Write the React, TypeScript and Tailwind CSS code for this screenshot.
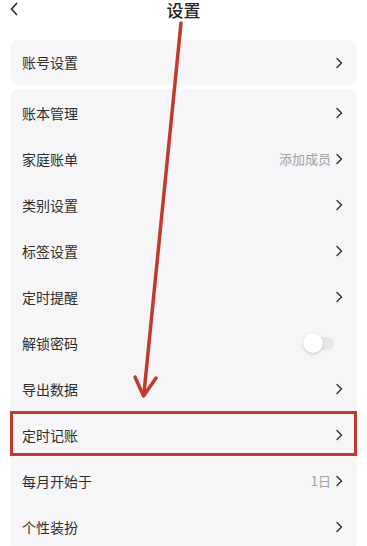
import React from 'react';

const FONT = { fontFamily: '"Noto Sans CJK SC", "Noto Sans", sans-serif' };

const Chevron = () => (
  <svg width="8" height="12" viewBox="0 0 8 12" className="shrink-0">
    <path d="M2 1.5 L6.5 6 L2 10.5" fill="none" stroke="#3a3a3a" strokeWidth="1.5" strokeLinecap="round" strokeLinejoin="round" />
  </svg>
);

const Toggle = () => (
  <div className="relative w-[30px] h-[13px] mr-[9px]">
    <div className="absolute inset-0 rounded-full bg-[#e8e8ea]" />
    <div className="absolute left-[-1px] top-[-4px] w-[20px] h-[20px] rounded-full bg-white shadow-[0_1px_3px_rgba(0,0,0,0.22)]" />
  </div>
);

type RowProps = { label: string; value?: string; toggle?: boolean };

const Row: React.FC<RowProps> = ({ label, value, toggle }) => (
  <div className="flex items-center h-[46px] pl-[12px] pr-[14px]">
    <span className="flex-1 text-[14px] text-[#2e2e2e]">{label}</span>
    {value && <span className="text-[13px] text-[#a0a0a0] mr-[4px]">{value}</span>}
    {toggle ? <Toggle /> : <Chevron />}
  </div>
);

const ROWS: RowProps[] = [
  { label: '账本管理' },
  { label: '家庭账单', value: '添加成员' },
  { label: '类别设置' },
  { label: '标签设置' },
  { label: '定时提醒' },
  { label: '解锁密码', toggle: true },
  { label: '导出数据' },
  { label: '定时记账' },
  { label: '每月开始于', value: '1日' },
  { label: '个性装扮' },
];

export default function App() {
  return (
    <div className="relative w-[367px] h-[546px] overflow-hidden bg-white" style={FONT}>
      {/* Header */}
      <div className="relative h-[40px]">
        <svg width="10" height="14" viewBox="0 0 10 14" className="absolute left-[9px] top-[2px]">
          <path d="M7.5 1.5 L2.5 7 L7.5 12.5" fill="none" stroke="#333" strokeWidth="1.8" strokeLinecap="round" strokeLinejoin="round" />
        </svg>
        <div className="text-center text-[17px] leading-[20px] font-medium text-[#222]">设置</div>
      </div>

      {/* Account card */}
      <div className="mx-[10px] h-[45px] rounded-[8px] bg-[#f6f6f8] flex items-center pl-[12px] pr-[14px]">
        <span className="flex-1 text-[14px] text-[#2e2e2e]">账号设置</span>
        <Chevron />
      </div>

      {/* Main card */}
      <div className="mx-[10px] mt-[4px] pt-[1px] rounded-[8px] bg-[#f6f6f8]">
        {ROWS.map(r => (
          <Row key={r.label} {...r} />
        ))}
      </div>

      {/* Annotation overlay */}
      <div className="absolute left-[10px] top-[411px] w-[347px] h-[45px] border-[3px] border-[#c23a2e]" />
      <svg className="absolute left-0 top-0 pointer-events-none" width="367" height="546" viewBox="0 0 367 546">
        <line x1="181" y1="23" x2="144" y2="393" stroke="#c23a2e" strokeWidth="3.5" strokeLinecap="round" />
        <path d="M135 377 L143.5 396 L156 378" fill="none" stroke="#c23a2e" strokeWidth="3.5" strokeLinecap="round" strokeLinejoin="round" />
      </svg>
    </div>
  );
}
